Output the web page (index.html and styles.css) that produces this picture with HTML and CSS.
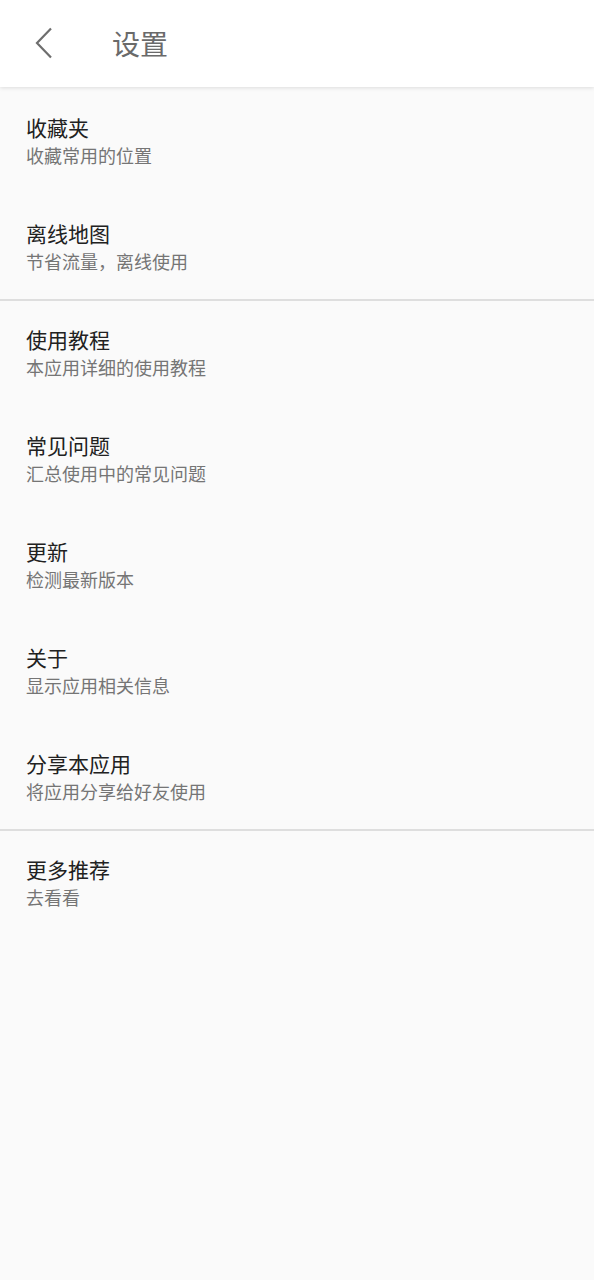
FILE: index.html
```html
<!DOCTYPE html>
<html lang="zh">
<head>
<meta charset="utf-8">
<title>设置</title>
<link rel="stylesheet" href="styles.css">
</head>
<body>
<header class="appbar">
  <span class="back">
    <svg width="20" height="32" viewBox="0 0 20 32"><polyline points="17,1.5 3,16 17,30.5" fill="none" stroke="#6e6e6e" stroke-width="2.2" stroke-linejoin="miter"/></svg>
  </span>
  <h1 class="title">设置</h1>
</header>
<main class="list">
  <section class="group">
    <div class="item"><div class="item-title">收藏夹</div><div class="item-sub">收藏常用的位置</div></div>
    <div class="item"><div class="item-title">离线地图</div><div class="item-sub">节省流量，离线使用</div></div>
  </section>
  <section class="group">
    <div class="item"><div class="item-title">使用教程</div><div class="item-sub">本应用详细的使用教程</div></div>
    <div class="item"><div class="item-title">常见问题</div><div class="item-sub">汇总使用中的常见问题</div></div>
    <div class="item"><div class="item-title">更新</div><div class="item-sub">检测最新版本</div></div>
    <div class="item"><div class="item-title">关于</div><div class="item-sub">显示应用相关信息</div></div>
    <div class="item"><div class="item-title">分享本应用</div><div class="item-sub">将应用分享给好友使用</div></div>
  </section>
  <section class="group">
    <div class="item"><div class="item-title">更多推荐</div><div class="item-sub">去看看</div></div>
  </section>
</main>
</body>
</html>
```
FILE: styles.css
```css
html, body {
  margin: 0;
  padding: 0;
  background: #fafafa;
  font-family: "Noto Sans CJK SC", "Noto Sans", sans-serif;
}
body {
  min-height: 1280px;
}
.appbar {
  height: 87px;
  background: #ffffff;
  display: flex;
  align-items: center;
  box-shadow: 0 1px 4px rgba(0,0,0,0.12);
  position: relative;
  z-index: 1;
}
.back {
  width: 20px;
  height: 32px;
  margin-left: 34px;
  margin-top: -1px;
  display: flex;
}
.title {
  margin: 0 0 0 58px;
  font-size: 28px;
  font-weight: 400;
  color: #6a6a6a;
  line-height: 1;
  margin-top: -2px;
}
.group + .group {
  box-shadow: inset 0 2px 0 #dedede;
}
.item {
  height: 106px;
  box-sizing: border-box;
  padding: 25px 26px 0;
}
.item-title {
  font-size: 21px;
  line-height: 30px;
  color: #212121;
}
.item-sub {
  font-size: 18px;
  line-height: 26px;
  color: #757575;
}
```
